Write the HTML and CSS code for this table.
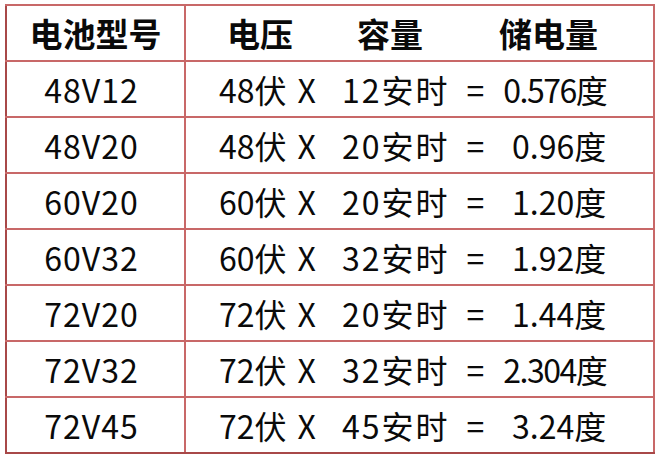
FILE: index.html
```html
<!DOCTYPE html>
<html lang="zh">
<head>
<meta charset="utf-8">
<link rel="stylesheet" href="styles.css">
</head>
<body>
<table class="spec">
  <tr class="head">
    <th class="model">电池型号</th>
    <th class="calc"><div class="hrow"><span>电压</span><span class="h2">容量</span><span class="h3">储电量</span></div></th>
  </tr>
  <tr><td class="model">48V12</td><td class="calc"><div class="crow"><span>48伏</span><span class="x">X</span><span class="a">12安时</span><span class="eq">=</span><span class="r tight">0.576度</span></div></td></tr>
  <tr><td class="model">48V20</td><td class="calc"><div class="crow"><span>48伏</span><span class="x">X</span><span class="a">20安时</span><span class="eq">=</span><span class="r">0.96度</span></div></td></tr>
  <tr><td class="model">60V20</td><td class="calc"><div class="crow"><span>60伏</span><span class="x">X</span><span class="a">20安时</span><span class="eq">=</span><span class="r">1.20度</span></div></td></tr>
  <tr><td class="model">60V32</td><td class="calc"><div class="crow"><span>60伏</span><span class="x">X</span><span class="a">32安时</span><span class="eq">=</span><span class="r">1.92度</span></div></td></tr>
  <tr><td class="model">72V20</td><td class="calc"><div class="crow"><span>72伏</span><span class="x">X</span><span class="a">20安时</span><span class="eq">=</span><span class="r">1.44度</span></div></td></tr>
  <tr><td class="model">72V32</td><td class="calc"><div class="crow"><span>72伏</span><span class="x">X</span><span class="a">32安时</span><span class="eq">=</span><span class="r tight">2.304度</span></div></td></tr>
  <tr><td class="model">72V45</td><td class="calc"><div class="crow"><span>72伏</span><span class="x">X</span><span class="a">45安时</span><span class="eq">=</span><span class="r">3.24度</span></div></td></tr>
</table>
</body>
</html>
```
FILE: styles.css
```css
html, body {
  margin: 0;
  padding: 0;
  background: #ffffff;
}
body {
  padding: 4px 0 0 5px;
  font-family: "Noto Sans CJK SC", "Noto Sans", sans-serif;
  color: #0a0a0a;
}
.spec {
  border-collapse: collapse;
  width: 650px;
  table-layout: fixed;
}
.spec td, .spec th {
  border: 2px solid #c86868;
  height: 54px;
  padding: 0;
  text-align: center;
  vertical-align: middle;
  white-space: nowrap;
}
.spec .model {
  width: 177px;
  border-left: 2px solid #a84848;
}
.spec tr:last-child td {
  border-bottom: 2px solid #a84848;
}
.spec th {
  font-size: 33px;
  font-weight: 700;
  line-height: 1;
}
.spec td {
  font-size: 32px;
  font-weight: 400;
  line-height: 1;
}
.spec td.model {
  letter-spacing: 1px;
  padding-right: 8px;
}
.hrow {
  display: flex;
  align-items: center;
  padding-left: 41px;
}
.h2 { margin-left: 64px; }
.h3 { margin-left: 76px; }
.crow {
  display: flex;
  align-items: center;
  padding-left: 33px;
}
.x { margin-left: 11px; }
.a {
  margin-left: 26px;
  letter-spacing: 2px;
}
.eq { margin-left: 17px; }
.r {
  width: 122px;
  text-align: right;
}
.r.tight {
  letter-spacing: -1.5px;
}
```
